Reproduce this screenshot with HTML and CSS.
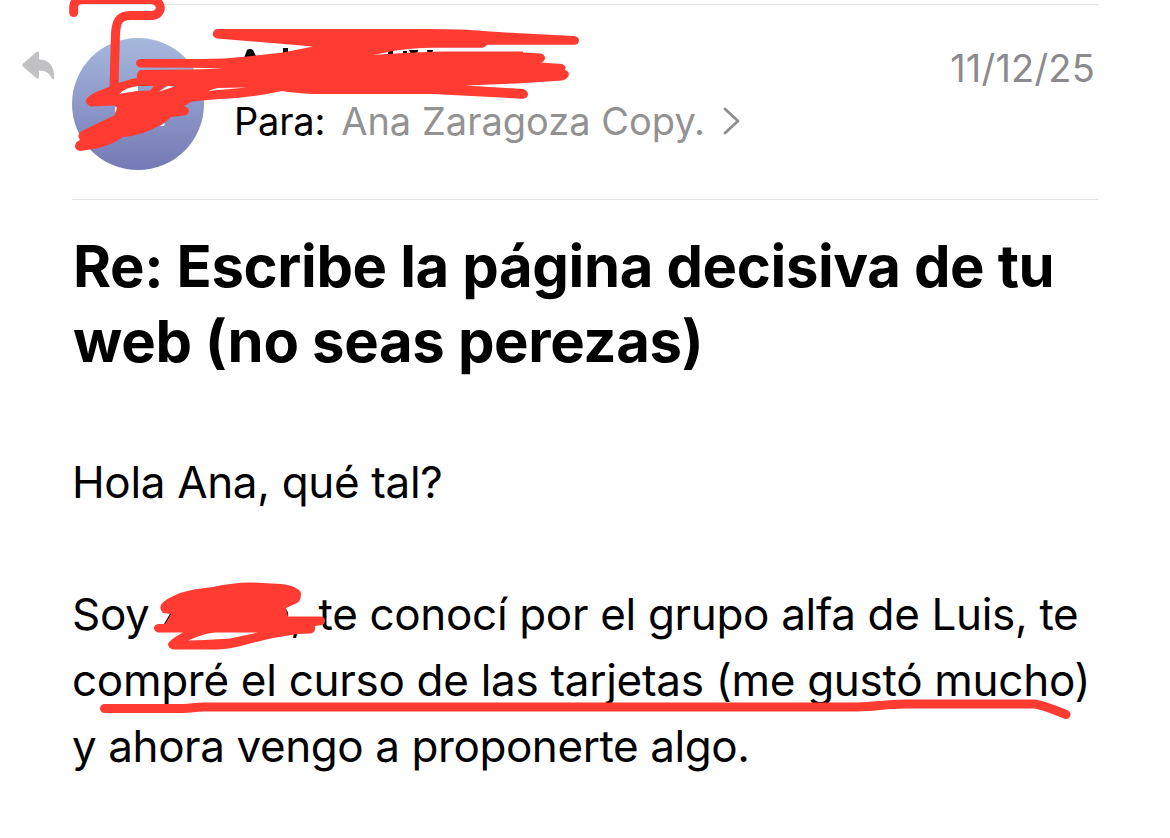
FILE: index.html
```
<!DOCTYPE html>
<html lang="es">
<head>
  <meta charset="UTF-8">
  <meta name="viewport" content="width=device-width, initial-scale=1.0">
  <title>Re: Escribe la página decisiva de tu web</title>
  <link rel="stylesheet" href="styles.css">
</head>
<body>
  <main class="message">
    <header class="message-header">
      <svg class="reply-icon" viewBox="0 0 33 29">
        <path d="M1.2 12.6 14.4 1Q16.6-.3 17 2v6.2C26.500 8.500 32.500 15 32.300 26.500Q32 29.200 29.800 27.200C27 21.500 23 19.800 17 19.800v6.400Q16.600 28.500 14.400 27.200L1.200 15.700Q-.5 14.100 1.200 12.600Z"/>
      </svg>
      <div class="avatar"></div>
      <div class="people">
        <div class="recipient">
          <span class="label">Para:</span>
          <span class="name">Ana Zaragoza Copy.</span>
          <svg class="chevron" viewBox="0 0 17 28"><path d="M2 2l13 12L2 26"/></svg>
        </div>
      </div>
      <time class="date">11/12/25</time>
    </header>

    <h1 class="subject">
      <span class="line subject-1">Re: Escribe la página decisiva de tu</span>
      <span class="line subject-2">web (no seas perezas)</span>
    </h1>

    <div class="body">
      <p class="line greeting">Hola Ana, qué tal?</p>
      <p>
        <span class="line body-1"><span>Soy</span><span class="redacted">,</span><span class="rest">te conocí por el grupo alfa de Luis, te</span></span>
        <span class="line body-2">compré el curso de las tarjetas (me gustó mucho)</span>
        <span class="line body-3">y ahora vengo a proponerte algo.</span>
      </p>
    </div>

    <!-- Marker strokes over the message -->
    <svg class="markup" viewBox="0 0 1170 838">
      <g class="ink">
        <path d="M244 58l3-8q3-2 6 0l4 8zM283 48h5v7h-5zM388 53l1-2 4-1v6h-5zM403 51h4v6h-4zM409 50h9q0 3-4 4h-3zM427 50h6q0 3-3 3-3 0-3-3zM439 83q10 5 20 0v2q-10 3-20 0z"/>
        <path d="M164 624l7-12h4v12zM286 609q4 5 1 10h-3z"/>
      </g>
      <path class="initials" d="M119 94l6-6 13-2v5zM115 107l5 1-3 5-2-1zM160 91l8-5 7 1-10 4zM160 126l5-3-1 3z"/>
      <g class="stroke">
        <path d="M73.700 12.500V7Q74-.5 83-.5H150C163-.5 164 15.500 151 15.500H130C119 15.500 116 22 115.500 34L114 88"/>
        <path d="M104.500 708.500H183C192 708.500 194 707 204 707H857C875 707 885 704 905 704H1034Q1040 704 1066 714.500"/>
      </g>
      <path class="scribble" d="M140 59L200 59Q225 59 247 56.500L283 52.500 313 46.500 217 38.500Q212 37 213 33Q214 29 218 29H427Q465 29 483 31L515 33 574 36Q579 37 579 40Q579 44 575 44.700H487Q485 48 480 47.800H433Q410 48 393 51L373 55Q410 52 443 51.500H523V52.500L541 53.500Q545 55 545 58Q545 61 541 62.500L562 64Q567 66 565 70Q570 72 568.500 76Q567 79 562 80.500L517 83.500 465 85.500 523 89Q528 91 528 94Q528 98 523 98.700L433 94H313Q294 93 282 91Q250 98 213 99.500L192 101.500 184 106Q189 108 189 111Q188 115 184 115.500L171 117Q164 125 143 133Q134 136 123 137Q108 147 93 149L80 151Q75 150 75 146Q75 142 80 140Q77 136 80 132L115 115 117 107 114 105.500 91 106.500Q86 105 86 100Q88 96 96 92L110 86.500Q125 80 137 78Q136 73 140 70L194 69.500 224 68.500 194 67.700 140 67.500Q136 66 136 63Q136 60 140 59ZM119 94L138 91 150 90.500 154 86 138 86Q126 87 119 94ZM158 92L176 86 166 86ZM208 91L219 90 247 87.500 217 88Z"/>
      <path class="scribble" d="M163 613Q159 609 161 605Q163 600 180 593Q192 589 213 587Q235 582 253 582.500L281 584Q298 586 301 593Q301 601 297 603L286 608 288 616.500H321Q325 617 325 620.500Q325 624 322 625L315 626Q316 632 311 633.500L297 634 273 638 250 643.500Q232 649 217 649.500H173Q168 648 168 644Q169 640 183 632.500H158Q154 631 154 628Q154 625 158 624H165L171 614ZM188 640.500L205 640 230 638.500 258 632.500H215Q205 633 188 640.500Z"/>
    </svg>
  </main>
</body>
</html>
```
FILE: styles.css
```
:root {
  --text: #000;
  --muted: #929292;
  --rule: #e3e3e4;
  --marker: #ff3b32;
  --font-family: Inter, "Liberation Sans", sans-serif;
}

* {
  box-sizing: border-box;
}

body {
  margin: 0;
  background: #fff;
  color: var(--text);
  font-family: var(--font-family);
}

.message {
  position: relative;
  height: 838px;
  padding: 4px 72px 0;
  overflow: hidden;
}

.message-header {
  display: flex;
  align-items: flex-start;
  height: 196px;
  border-top: 1px solid var(--rule);
  border-bottom: 1px solid var(--rule);
}

.reply-icon {
  flex: none;
  width: 33px;
  height: 29px;
  margin: 46px 17px 0 -50px;
  fill: #c1c1c3;
}

.avatar {
  flex: none;
  width: 132px;
  height: 132px;
  margin-top: 33px;
  border-radius: 50%;
  background: linear-gradient(#a6b8dc, #7579b5);
}

.people {
  flex: 1;
  padding: 93px 0 0 30px;
}

.recipient {
  display: flex;
  align-items: center;
  height: 46px;
  font-size: 38px;
  white-space: nowrap;
}

.label {
  letter-spacing: -0.2px;
}

.name {
  margin-left: 16px;
  color: var(--muted);
}

.chevron {
  width: 17px;
  height: 28px;
  margin-left: 18px;
  fill: none;
  stroke: #8e8e8e;
  stroke-width: 2.8;
  stroke-linecap: round;
  stroke-linejoin: round;
}

.date {
  padding: 40px 3px 0 0;
  color: #8b8b8d;
  font-size: 38px;
  line-height: 46px;
  letter-spacing: 0.2px;
}

.line {
  display: block;
  white-space: nowrap;
}

.subject {
  margin: 29px 0 0 1px;
  font-size: 58px;
  font-weight: 700;
  line-height: 75px;
}

.subject-1 {
  letter-spacing: -0.36px;
}

.subject-2 {
  letter-spacing: -0.33px;
}

.body {
  margin-top: 70px;
  font-size: 44px;
  line-height: 66px;
  letter-spacing: -0.33px;
}

.body p {
  margin: 0;
}

.body .greeting {
  margin-bottom: 66px;
}

.body-1 {
  display: flex;
}

.body-2 {
  letter-spacing: -0.29px;
}

.body-3 {
  letter-spacing: -0.42px;
}

.redacted {
  width: 153px;
  margin-right: 16px;
  text-align: right;
}

.markup {
  position: absolute;
  top: 0;
  left: 0;
  width: 1170px;
  height: 838px;
}

.scribble {
  fill: var(--marker);
  fill-rule: evenodd;
}

.stroke {
  fill: none;
  stroke: var(--marker);
  stroke-width: 9;
  stroke-linecap: round;
  stroke-linejoin: round;
}

.initials {
  fill: #fff;
}
```
